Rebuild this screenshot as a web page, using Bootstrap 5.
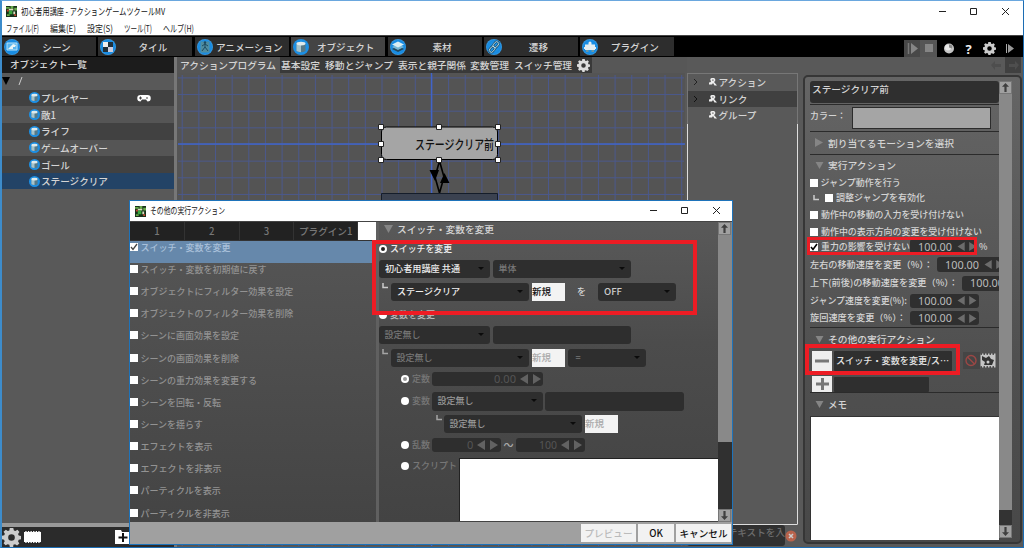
<!DOCTYPE html>
<html lang="ja">
<head>
<meta charset="utf-8">
<title>初心者用講座 - アクションゲームツクールMV</title>
<link href="https://cdn.jsdelivr.net/npm/bootstrap@5.3.0/dist/css/bootstrap.min.css" rel="stylesheet">
<style>
*{box-sizing:border-box}
body{margin:0;width:1024px;height:548px;overflow:hidden;background:#555;color:#d4d4d4;font:500 9.6px/14px "Noto Sans CJK JP","Noto Sans",sans-serif}
svg{display:block;flex:none}
.app{width:1024px;height:548px;border:1px solid #1c6db3;border-top-color:#6aa7de;border-left:2px solid #3d8ccb}
.fit{display:inline-block;white-space:nowrap;transform-origin:0 50%;flex:none}
.wtitle{height:20px;background:#fff;color:#111;padding-left:4px;font-weight:400}
.menus{height:14px;background:#fff;color:#222;padding-left:4px;font-weight:400}
.menus>.fit{margin-top:-1px}
.tools{height:22px;background:#000;border-top:1px solid #444;padding-top:1px}
.mtab{width:94px;height:19px;background:#2d2d2d;margin-right:2.4px;padding-left:2px;flex:none}
.mtab.on{background:#444}
.mtab .lbl{flex:1;text-align:center;margin-left:-3px}
.body-grid{display:grid;grid-template-columns:172px 3px 510px 1fr 219px;height:490px;background:#595959}
.side-head{height:16px;background:#1c1c1c;padding-left:8px}
.orow{height:16.65px;padding-left:27px;background:#555}
.orow:nth-child(odd){background:#414141}
.orow.sel{background:#234366}
.subs{height:16px;background:#575757}
.subs>.s{height:16px;background:#393939;flex:none;padding-left:3px;padding-top:1px}
.subs>.s.on{background:#555}
.tree{width:111px;height:452px;margin:16px 0 0 0;border:1px solid #777;border-bottom:1px solid #ddd;position:relative}
.tree:before,.tree:after{content:"";position:absolute;top:50px;bottom:0;width:1px;background:#ddd}
.tree:before{left:-1px}.tree:after{right:-1px}
.trow{height:16.5px;padding-left:6px}
.prop{height:469px;width:219px;margin-left:-1px;margin-top:18px;border:2px solid #363636;border-radius:5px;background:linear-gradient(#656565,#505050 60%,#484848);padding:3.5px 0 0 5px}
.pgrid{width:189px;overflow:hidden;display:grid;grid-template-rows:24px 27px 23px 21px 14px 16px 19px 14px 16px 20px 17.5px 17.5px 18px 23px 20px 6px 15px 24px 124px;font-size:9px}
.pgrid>div{display:flex;align-items:center;min-width:0}
.pgrid>.ln{border-bottom:1px solid #2b2b2b}
.field{background:#2f2f2f;border-radius:3px;flex:none;display:flex;align-items:center}
.num{width:69px;height:14.5px;padding-left:8px;color:#bbb;font:11px/14px "Noto Sans"}
.cbx{width:8px;height:8px;background:#fff;flex:none;margin-right:2.5px}
.head{font-size:9.6px;padding-left:5px}
.sq{width:20px;height:20px;background:#eee;flex:none}
.sbar{width:13px;background:#898989;display:flex;flex-direction:column;justify-content:space-between;flex:none}
.sbtn{width:13px;height:13px;background:#a0a0a0;border:1px solid #777}
.dlg{position:absolute;left:129px;top:200px;width:604px;height:345px;border:1px solid #1e73ba;background:#505050;font-size:9px}
.dlg .wtitle{height:21px;padding-left:5px;border-bottom:1px solid #444}
.dmain{height:300px;display:flex}
.dleft{width:246px;background:linear-gradient(#565656,#444)}
.dtab{width:54px;height:18px;margin-right:1px;background:#222;color:#777;text-align:center;line-height:18px;font-size:9.6px}
.drow{height:22.15px;color:#929292}
.drow .cbx{margin-top:2px}
.drow.on{background:#6688ab;color:#a9c0da;height:22px}
.dright{width:339px;overflow:hidden;background:linear-gradient(#595959,#4c4c4c 40%,#434343);display:grid;grid-template-rows:13px 25px 18px 4.5px 18.5px 25px 18px 4.5px 18px 5px 14px 6px 19px 4px 18.5px 5px 14px 6px 63px}
.dright>div{display:flex;align-items:center;min-height:0}
.dright>.up{align-items:flex-start}
.dright .field{background:#2e2e2e;height:100%;padding-left:5.5px;position:relative}
.caret:after{content:"";position:absolute;right:6px;top:7px;border:3px solid transparent;border-top-color:#0b0b0b;border-bottom:0}
.dim{color:#777}
.rad{width:8px;height:8px;border-radius:50%;background:#fff;flex:none}
.newb{width:33px;height:18px;background:#f3f3f3;color:#111;line-height:18px;flex:none;margin-left:3px}
.foot{height:22px;background:#a0a0a0;padding-right:1px;gap:2px}
.fb{height:18px;background:#f2f2f2;color:#111;text-align:center;line-height:18px;font-size:9.6px}
.note{position:absolute;border:4px solid #ed1c24}
.canv{height:473px;position:relative}
.lbar{height:20px;background:#2b2b2b}
</style>
<script src="https://cdn.jsdelivr.net/npm/bootstrap@5.3.0/dist/js/bootstrap.bundle.min.js"></script>
</head>
<body>
<svg width="0" height="0" style="position:absolute">
<defs>
<radialGradient id="bl"><stop offset="0" stop-color="#299ce8"/><stop offset=".8" stop-color="#168ae2"/><stop offset="1" stop-color="#3a9be0"/></radialGradient>
<symbol id="cyl" viewBox="0 0 16 16"><circle cx="8" cy="8" r="8" fill="#1c8fe4"/><path d="M3.500 4.500v7.500q4.500 2.500 9 0V4.500z" fill="#577987"/><path d="M3.500 4.500v7.500q2 1 4.500 1.200V4.500z" fill="#a5c3cc"/><ellipse cx="8" cy="4.600" rx="4.500" ry="1.900" fill="#dfeaec"/></symbol>
<symbol id="gear" viewBox="0 0 16 16"><path fill-rule="evenodd" d="M6.500 0h3l.5 2 1.300.6L13 1.500 14.700 3.300l-1.200 1.700.6 1.400 1.900.3v2.800l-1.900.4-.6 1.300 1.100 1.800-1.900 1.700-1.700-1-1.400.500L9.400 16H6.600L6.200 14.100l-1.400-.5-1.800 1L1.300 12.900l1-1.800-.6-1.300L0 9.400V6.600l1.900-.4.500-1.300L1.300 3.100 3.200 1.500l1.700 1 1.300-.5zM8 5.200a2.800 2.800 0 1 0 0 5.600 2.800 2.800 0 0 0 0-5.600"/></symbol>
<symbol id="appi" viewBox="0 0 12 12"><path fill="#17301a" d="M0 0h12v12H0z"/><path fill="#66a94a" d="M0 1h4v2H0zM5 0h3v3H5zM9 2h3v3H9zM1 9h3v2H1z"/><path fill="#d9dfbd" d="M3 3h5v2H3zM8 6h2v3H8z"/><path fill="#39a83d" d="M3 5h4v4H3z"/><path fill="#c6452f" d="M1 4h2v2H1zM9 9h2v2H9z"/></symbol>
<symbol id="arr" viewBox="0 0 20 10"><path d="M8 0v10L0 5zM13 0v10l8-5z"/></symbol>
<symbol id="up" viewBox="0 0 11 11"><path d="M5.500 1 9 4.800H6.600V10H4.400V4.800H2z" fill="#3f3f3f"/></symbol>
<symbol id="wr" viewBox="0 0 8 8"><path d="M1.200 1 2.500 0H5l1.200 1v2L5 4 8 7.500H5.500L4 5 3 6.500H0V4.500L2 4z" fill="#eee"/><path d="M3.300 1.500h1.200v1.200H3.300z" fill="#555"/></symbol>
<symbol id="tri" viewBox="0 0 9 8"><path d="M0 0h9L4.500 8z" fill="#858585"/></symbol>
<symbol id="ell" viewBox="0 0 6 6"><path d="M1 0v4.500h5" stroke="#ccc" stroke-width="1.500" fill="none"/></symbol>
</defs></svg>

<div class="app">
 <div class="wtitle d-flex align-items-center"><svg width="11" height="11"><use href="#appi"/></svg>
  <span class="fit ms-1" data-w="144">初心者用講座 - アクションゲームツクールMV</span>
  <svg class="ms-auto" width="85" height="12" style="margin-right:7px" fill="none" stroke="#222"><path d="M8 6.500h7M39.500 3.500h6v6h-6zM71 3l7 7M78 3l-7 7"/></svg></div>
 <div class="menus d-flex align-items-center">
  <span class="fit" data-w="33">ファイル(F)</span><span class="fit" data-w="26" style="margin-left:11px">編集(E)</span><span class="fit" data-w="26" style="margin-left:11px">設定(S)</span><span class="fit" data-w="28" style="margin-left:11px">ツール(T)</span><span class="fit" data-w="31" style="margin-left:11px">ヘルプ(H)</span></div>
 <div class="tools d-flex">
  <div class="mtab d-flex align-items-center"><svg width="16" height="16" viewBox="0 0 16 16"><circle cx="8" cy="8" r="8" fill="url(#bl)"/><path d="M3 4h10v7H3z" fill="#57b4ef" stroke="#b9e0f5"/><path d="M7 7l2-2 3 1-1 2H9v2H4z" fill="#e9f4f5"/></svg><span class="lbl">シーン</span></div>
  <div class="mtab d-flex align-items-center"><svg width="16" height="16" viewBox="0 0 16 16"><circle cx="8" cy="8" r="8" fill="url(#bl)"/><path d="M3 3h5v5H3z" fill="#eee"/><path d="M8 3h5v5H8zM3 8h5v5H3z" fill="#20303a"/><path d="M8 8h5v5H8z" fill="#ccd"/></svg><span class="lbl">タイル</span></div>
  <div class="mtab d-flex align-items-center"><svg width="16" height="16" viewBox="0 0 16 16"><circle cx="8" cy="8" r="8" fill="url(#bl)"/><path d="M3.500 2.500h9v11h-9z" fill="#4f8da0"/><path d="M8 4v4M5 7l3-2 3 2M8 8l-3 4M8 8l3 4" stroke="#1d4a60" fill="none"/><circle cx="8" cy="3.500" r="1.200" fill="#1d4a60"/></svg><span class="lbl">アニメーション</span></div>
  <div class="mtab on d-flex align-items-center"><svg width="16" height="16"><use href="#cyl" width="16" height="16"/></svg><span class="lbl">オブジェクト</span></div>
  <div class="mtab d-flex align-items-center"><svg width="16" height="16" viewBox="0 0 16 16"><circle cx="8" cy="8" r="8" fill="url(#bl)"/><path d="M2 10l6-3 6 3-6 3z" fill="#23485e"/><path d="M2 8l6-3 6 3-6 3z" fill="#76b6d4"/><path d="M2 5.500l6-3 6 3-6 3z" fill="#d9eef4"/></svg><span class="lbl">素材</span></div>
  <div class="mtab d-flex align-items-center"><svg width="16" height="16" viewBox="0 0 16 16"><circle cx="8" cy="8" r="8" fill="url(#bl)"/><g fill="none" stroke="#1d4f70" stroke-width="2.200"><rect x="6.500" y="3.500" width="6.500" height="4" rx="2" transform="rotate(-50 10 5.500)"/><rect x="3" y="8.500" width="6.500" height="4" rx="2" transform="rotate(-50 6 10.500)"/></g><g fill="none" stroke="#b9dfec" stroke-width=".9"><rect x="6.500" y="3.500" width="6.500" height="4" rx="2" transform="rotate(-50 10 5.500)"/><rect x="3" y="8.500" width="6.500" height="4" rx="2" transform="rotate(-50 6 10.500)"/></g></svg><span class="lbl">遷移</span></div>
  <div class="mtab d-flex align-items-center"><svg width="16" height="16" viewBox="0 0 16 16"><circle cx="8" cy="8" r="8" fill="url(#bl)"/><path d="M3 5.500h3.500V4a1.500 1.500 0 0 1 3 0v1.500H13V8h1v2h-1v1H3v-1H2V8h1z" fill="#e4edf0"/><path d="M4 11h2.500v2H4zM9.500 11H12v2H9.500z" fill="#6d97a3"/></svg><span class="lbl">プラグイン</span></div>
  <svg class="ms-auto" width="120" height="20" viewBox="903 37 120 20"><path d="M904 40h33v17h-33z" fill="#484848"/><path d="M920 40h17v17h-17z" fill="#555"/><path d="M908.500 43v11" stroke="#777" stroke-width="1.500"/><path d="M911 43l7 5.500-7 5.500zM925 44h8v8h-8z" fill="#858585"/><circle cx="949" cy="48.500" r="5" fill="#c5c5c5"/><circle cx="948" cy="47.500" r="3" fill="#e8e8e8"/><path d="M949 44.500q4.500 0 3 4l-3-1z" fill="#888"/><text x="965.500" y="53.500" font-family="Open Sans" font-weight="700" font-size="13" fill="#eee">?</text><use href="#gear" x="983" y="42" width="13" height="13" fill="#ccc"/><path d="M1006.500 44v9" stroke="#aaa"/><path d="M1008 44l6 4.500-6 4.500z" fill="#999"/></svg>
 </div>

 <div class="body-grid">
  <div class="d-flex flex-column">
   <div class="side-head"><span class="fit" data-w="77">オブジェクト一覧</span></div>
   <div>
    <div class="d-flex align-items-center" style="height:16.65px"><svg width="25" height="10"><path d="M0 1h8L4 9z" fill="#000"/><path d="M17 9 20 1" stroke="#ccc"/></svg></div>
   </div>
   <div>
    <div class="orow d-flex align-items-center"><svg width="12" height="11"><use href="#cyl" width="11" height="11"/></svg>プレイヤー<svg width="14" height="8" viewBox="0 0 14 8" style="margin-left:48px"><path d="M3.500 1h7a3 3 0 0 1 0 6.500L9 5.500H5L3.500 7.500a3 3 0 0 1 0-6.500" fill="#fff"/><path d="M2 4h3M3.500 2.500v3M10 3v2" stroke="#444"/></svg></div>
    <div class="orow d-flex align-items-center"><svg width="12" height="11"><use href="#cyl" width="11" height="11"/></svg>敵1</div>
    <div class="orow d-flex align-items-center"><svg width="12" height="11"><use href="#cyl" width="11" height="11"/></svg>ライフ</div>
    <div class="orow d-flex align-items-center"><svg width="12" height="11"><use href="#cyl" width="11" height="11"/></svg>ゲームオーバー</div>
    <div class="orow d-flex align-items-center"><svg width="12" height="11"><use href="#cyl" width="11" height="11"/></svg>ゴール</div>
    <div class="orow sel d-flex align-items-center"><svg width="12" height="11"><use href="#cyl" width="11" height="11"/></svg>ステージクリア</div>
   </div>
   <div class="mt-auto" style="height:4px;background:#999"></div>
   <div class="lbar d-flex align-items-center"><svg width="19" height="19"><use href="#gear" fill="#ccc" width="19" height="19"/></svg>
    <svg width="17" height="14" style="margin-left:3px"><path d="M0 1h17v12H0z" fill="#fff"/><path d="M0 1h17M0 13h17" stroke="#222" stroke-width="2" stroke-dasharray="1.300"/></svg>
    <svg width="14" height="14" style="margin-left:74px"><path d="M0 2V0h6l1 2h7v12H0z" fill="#fff"/><path d="M8 3v9M3.500 7.500h9" stroke="#111" stroke-width="2"/></svg></div>
  </div>
  <div style="background:#777"></div>
  <div>
   <div class="subs d-flex">
    <div class="s on" style="width:103px"><span class="fit" data-w="96">アクションプログラム</span></div>
    <div class="s" style="width:44px;padding-left:1px"><span class="fit" data-w="39">基本設定</span></div>
    <div class="s" style="width:73px;padding-left:1px"><span class="fit" data-w="68">移動とジャンプ</span></div>
    <div class="s" style="width:72px;padding-left:1px"><span class="fit" data-w="68">表示と親子関係</span></div>
    <div class="s" style="width:44px;padding-left:1px"><span class="fit" data-w="39">変数管理</span></div>
    <div class="s" style="width:61px;padding-left:1px"><span class="fit" data-w="58">スイッチ管理</span></div>
    <div class="s pt-0" style="width:18px"><svg width="13" height="16"><use href="#gear" y="2" width="13" height="13" fill="#ddd"/></svg></div>
   </div>
   <svg class="canv" width="508" height="473" viewBox="177 73 508 473">
    <defs><pattern id="gp" x="181.700" y="144" width="16.650" height="16.650" patternUnits="userSpaceOnUse"><path d="M0 .5h16.650M.5 0v16.650" stroke="#4a588c"/></pattern></defs>
    <path d="M177 73h508v473H177z" fill="#545454"/><path d="M178 75h506v471H178z" fill="url(#gp)"/>
    <path d="M178 144h507M431.500 73v473" stroke="#4064c8" stroke-width="1.400"/>
    <rect x="381.500" y="127" width="116" height="32.500" rx="5" fill="#a5a5a5" stroke="#000"/>
    <text x="415" y="148.500" font-size="13" fill="#111" font-weight="500" textLength="79" lengthAdjust="spacingAndGlyphs">ステージクリア前</text>
    <g fill="#fff" stroke="#222"><path d="M378.500 124.500h5v5h-5zM436.500 124.500h5v5h-5zM495.500 124.500h5v5h-5zM378.500 141.500h5v5h-5zM495.500 141.500h5v5h-5zM378.500 157.500h5v5h-5zM495.500 157.500h5v5h-5z"/></g>
    <path d="M439.500 161l-4.500 16 4.500 16 4.500-16z" fill="none" stroke="#000" stroke-width="1.600"/><path d="M429.500 170h9.500l-4 11zM440 183h9.500l-5-10z"/>
    <path d="M436.500 157.500h5v5h-5z" fill="#fff" stroke="#222"/>
    <path d="M381.500 193.500h116v30h-116z" fill="#3b4250" stroke="#151d2a"/>
   </svg>
  </div>
  <div>
   <div class="tree">
    <div class="trow d-flex align-items-center"><svg width="6" height="8"><path d="M0 1l3 3-3 3" stroke="#222" fill="none"/></svg><svg width="8" height="8" style="margin:0 1.5px 0 9px"><use href="#wr"/></svg><span>アクション</span></div>
    <div class="trow d-flex align-items-center" style="background:#404040"><svg width="6" height="8"><path d="M0 1l3 3-3 3" stroke="#111" fill="none"/></svg><svg width="8" height="8" style="margin:0 1.5px 0 9px"><use href="#wr"/></svg><span>リンク</span></div>
    <div class="trow d-flex align-items-center"><svg width="6" height="8"></svg><svg width="8" height="8" style="margin:0 1.5px 0 9px"><use href="#wr"/></svg><span>グループ</span></div>
   </div>
   <div class="d-flex align-items-center"><div class="text-end overflow-hidden" style="width:98px;height:21px;background:#303030;color:#6c6c6c;border-radius:3px;white-space:nowrap">テキストを入</div><svg width="12" height="12"><circle cx="6" cy="6" r="5.500" fill="#b9634c"/><path d="M4 4l4 4M8 4l-4 4" stroke="#ccc" stroke-width="1.500"/></svg></div>
  </div>
  <div class="position-relative">
   <svg class="position-absolute" style="right:2px;top:0" width="32" height="16"><path d="M16 0h16v16H16z" fill="#404040"/><path d="M2 8l4-4v3h6v3H6v3zM30 8l-4-4v3h-6v3h6v3z" fill="#4e4e4e"/></svg>
   <div class="prop d-flex">
    <div class="pgrid">
     <div class="ln"><div class="field w-100" style="height:22px;padding:0 0 6px 2px"><span class="fit" data-w="77" style="font-size:9.6px">ステージクリア前</span></div></div>
     <div class="ln"><span class="fit" style="margin-top:-3px" data-w="36">カラー：</span><i style="margin-left:6px;width:139px;height:22px;background:#a5a5a5;border:1px solid #2c2c2c"></i></div>
     <div class="head ln"><svg width="8" height="9"><path d="M0 0v9l8-4.500z" fill="#858585"/></svg><span class="fit" style="margin-left:5px" data-w="126">割り当てるモーションを選択</span></div>
     <div class="head"><svg width="9" height="7"><use href="#tri"/></svg><span class="fit" style="margin-left:4px" data-w="68">実行アクション</span></div>
     <div><i class="cbx"></i>ジャンプ動作を行う</div>
     <div><svg width="6" height="6" style="margin:0 6px 0 3px"><use href="#ell"/></svg><i class="cbx"></i><span class="fit" data-w="89">調整ジャンプを有効化</span></div>
     <div><i class="cbx"></i><span class="fit" data-w="143">動作中の移動の入力を受け付けない</span></div>
     <div><i class="cbx"></i><span class="fit" data-w="161">動作中の表示方向の変更を受け付けない</span></div>
     <div><svg class="cbx" viewBox="0 0 8 8"><path d="M1 4l2 2.500L7 1" fill="none" stroke="#000" stroke-width="1.600"/></svg><span class="fit" data-w="89">重力の影響を受けない</span><div class="field num" style="margin-left:.5px;width:67px"><span class="fit" data-w="34">100.00</span><svg class="ms-1" width="21" height="9" fill="#6c6c6c"><use href="#arr"/></svg></div><span style="margin-left:2px">%</span></div>
     <div><span class="fit" data-w="123">左右の移動速度を変更（%）：</span><div class="field num" style="margin-left:4px"><span class="fit" data-w="34">100.00</span><svg class="ms-1" width="21" height="9" fill="#6c6c6c"><use href="#arr"/></svg></div></div>
     <div><span class="fit" data-w="148">上下(前後)の移動速度を変更（%）：</span><div class="field num" style="margin-left:4px"><span class="fit" data-w="34">100.00</span></div></div>
     <div><span class="fit" data-w="97">ジャンプ速度を変更(%):</span><div class="field num" style="margin-left:3px"><span class="fit" data-w="34">100.00</span><svg class="ms-1" width="21" height="9" fill="#6c6c6c"><use href="#arr"/></svg></div></div>
     <div class="ln"><span class="fit" data-w="96">旋回速度を変更（%）：</span><div class="field num" style="margin-left:4px"><span class="fit" data-w="34">100.00</span><svg class="ms-1" width="21" height="9" fill="#6c6c6c"><use href="#arr"/></svg></div></div>
     <div class="head"><svg width="9" height="7"><use href="#tri"/></svg><span class="fit" style="margin-left:4px" data-w="107">その他の実行アクション</span></div>
     <div style="padding-left:2px"><svg class="sq"><path d="M3 10h14" stroke="#777" stroke-width="3"/></svg><div class="field" style="margin-left:2px;width:118px;height:20px;padding-left:2px;border-radius:1px;color:#e4e4e4"><span class="fit" data-w="113">スイッチ・変数を変更/ス…</span></div>
      <svg width="34" height="17" style="margin-left:11px"><path d="M0 0h17v17H0z" fill="#454545"/><circle cx="8" cy="8.500" r="5" fill="none" stroke="#9b4745" stroke-width="1.400"/><path d="M4.500 5l7 7" stroke="#9b4745" stroke-width="1.400"/><path d="M17.500 1.500h15v14h-15z" fill="#c4c4c4"/><path d="M17.500 2h15M17.500 15h15" stroke="#333" stroke-width="1.500" stroke-dasharray="1.500"/><path d="M19 4l4 2 3-2 2 3 3 1-2 5h-8l1-3-3-2z" fill="#333"/><circle cx="25" cy="10" r="1.500" fill="#ccc"/></svg></div>
     <div></div>
     <div style="padding-left:2px"><svg class="sq" style="height:16px"><path d="M4 8h13M10.500 2v12" stroke="#777" stroke-width="3"/></svg><div class="field" style="margin-left:2px;width:95px;height:15px;border-radius:1px"></div></div>
     <div class="head" style="border-top:1px solid #2b2b2b"><svg width="9" height="7"><use href="#tri"/></svg><span class="fit" style="margin-left:4px" data-w="19">メモ</span></div>
     <div style="background:#fff;border:1px solid #333;border-width:1px 0 0 1px"></div>
    </div>
    <div class="sbar" style="height:457px"><svg class="sbtn"><use href="#up"/></svg><div class="mt-auto" style="height:15px;background:#333"></div><svg class="sbtn" style="transform:scaleY(-1)"><use href="#up"/></svg></div>
   </div>
  </div>
 </div>
</div>

<div class="dlg">
 <div class="wtitle d-flex align-items-center"><svg width="11" height="11"><use href="#appi"/></svg><span class="fit" style="margin-left:4px" data-w="75">その他の実行アクション</span>
 <svg class="ms-auto" width="85" height="12" style="margin-right:7px" fill="none" stroke="#222"><path d="M10 5.500h7M41.500 2.500h6v6h-6zM73 2l7 7M80 2l-7 7"/></svg></div>
 <div class="dmain">
  <div class="dleft">
   <div class="d-flex" style="height:19px;background:#333"><div class="dtab">1</div><div class="dtab">2</div><div class="dtab">3</div><div class="dtab" style="width:63px">プラグイン1</div><div style="width:18px;height:18px;background:#fff"></div></div>
   <div id="acts"></div>
  </div>
  <div style="width:3px;background:#606060"></div>
  <div class="dright">
   <div class="head"><svg width="9" height="8"><use href="#tri"/></svg><span class="fit" style="margin-left:4px" data-w="97">スイッチ・変数を変更</span></div>
   <div style="padding-top:3px"><svg width="8" height="8"><circle cx="4" cy="4" r="3" fill="#222" stroke="#fff" stroke-width="2"/></svg><span class="fit" style="margin-left:3px;color:#eee" data-w="62">スイッチを変更</span></div>
   <div><div class="field caret" style="width:111px;color:#eee"><span class="fit" data-w="75">初心者用講座 共通</span></div><div class="field caret dim" style="width:138px;margin-left:3px">単体</div></div>
   <div></div>
   <div><svg width="6" height="6" style="margin:0 3px 12px 3px"><use href="#ell"/></svg><div class="field caret" style="width:138px;color:#eee"><span class="fit" data-w="63">ステージクリア</span></div><div class="newb"><span class="fit" data-w="19">新規</span></div><span style="margin:0 12px 0 12px">を</span><div class="field caret" style="width:78px;color:#ccc"><span class="fit" data-w="18">OFF</span></div></div>
   <div style="padding-top:3px"><i class="rad"></i><span style="margin-left:3px;color:#bbb">変数を変更</span></div>
   <div><div class="field caret dim" style="width:111px">設定無し</div><div class="field" style="width:138px;margin-left:3px"></div></div>
   <div></div>
   <div><svg width="6" height="6" style="margin:0 3px 12px 3px;opacity:.7"><use href="#ell"/></svg><div class="field caret dim" style="width:138px">設定無し</div><div class="newb" style="color:#aaa"><span class="fit" data-w="19">新規</span></div><div class="field caret dim" style="width:78px;margin-left:3px">&nbsp;=</div></div>
   <div></div>
   <div class="dim" style="padding-left:22px"><svg width="8" height="8"><circle cx="4" cy="4" r="4" fill="#fff"/><circle cx="4" cy="4" r="2" fill="#999"/></svg><span class="fit" style="margin-left:3px" data-w="18">定数</span><div class="field num" style="width:111px;margin-left:2px;padding-left:62px;color:#555"><span class="fit" data-w="22">0.00</span><svg style="margin-left:3px" width="22" height="10" fill="#626262"><use href="#arr"/></svg></div></div>
   <div></div>
   <div class="dim" style="padding-left:22px"><i class="rad"></i><span class="fit" style="margin-left:3px" data-w="18">変数</span><div class="field caret" style="width:111px;margin-left:2px;color:#999">設定無し</div><div class="field" style="width:139px;margin-left:2px"></div></div>
   <div></div>
   <div style="padding-left:54px"><svg width="6" height="6" style="margin:0 3px 12px 3px;opacity:.7"><use href="#ell"/></svg><div class="field caret" style="width:138px;color:#999;margin-left:-1px">設定無し</div><div class="newb" style="color:#aaa"><span class="fit" data-w="19">新規</span></div></div>
   <div></div>
   <div class="dim" style="padding-left:22px"><i class="rad"></i><span class="fit" style="margin-left:3px" data-w="18">乱数</span><div class="field num" style="width:69px;margin-left:2px;padding-left:35px;color:#555">0<svg style="margin-left:3px" width="22" height="10" fill="#626262"><use href="#arr"/></svg></div><span style="width:15px;text-align:center;font-size:10px;color:#aaa">～</span><div class="field num" style="width:69px;padding-left:23px;color:#555"><span class="fit" data-w="18">100</span><svg style="margin-left:3px" width="22" height="10" fill="#626262"><use href="#arr"/></svg></div></div>
   <div></div>
   <div class="up dim" style="padding-left:22px"><i class="rad" style="margin-top:4px"></i><span class="fit" style="margin-left:3px;margin-top:1px" data-w="45">スクリプト</span><div style="margin-left:2px;width:259px;height:63px;background:#fff;border:1px solid #222;border-width:1px 0 0 1px"></div></div>
  </div>
  <div class="sbar" style="width:14px"><svg class="sbtn"><use href="#up"/></svg><div class="mt-auto" style="height:67px;background:#303030"></div><svg class="sbtn" style="transform:scaleY(-1)"><use href="#up"/></svg></div>
 </div>
 <div class="foot d-flex justify-content-end align-items-center"><div class="fb" style="width:55px;color:#bbb">プレビュー</div><div class="fb" style="width:36px">OK</div><div class="fb" style="width:55px">キャンセル</div></div>
</div>

<div class="note" style="left:372px;top:240px;width:325px;height:75px"></div>
<div class="note" style="left:807px;top:237px;width:170px;height:18px;border-width:3.500px"></div>
<div class="note" style="left:805px;top:344px;width:155px;height:31px"></div>

<script>
const names=["スイッチ・変数を変更","スイッチ・変数を初期値に戻す","オブジェクトにフィルター効果を設定","オブジェクトのフィルター効果を削除","シーンに画面効果を設定","シーンの画面効果を削除","シーンの重力効果を変更する","シーンを回転・反転","シーンを揺らす","エフェクトを表示","エフェクトを非表示","パーティクルを表示","パーティクルを非表示"];
document.getElementById("acts").innerHTML=names.map((n,i)=>`<div class="drow d-flex align-items-start${i?"":" on"}"><svg class="cbx" viewBox="0 0 8 8">${i?"":'<path d="M1 4l2 2.500L7 1" fill="none" stroke="#444" stroke-width="1.300"/>'}</svg><span>${n}</span></div>`).join("");
// squeeze labels to their column widths
document.querySelectorAll("[data-w]").forEach(e=>{const w=+e.dataset.w,o=e.getBoundingClientRect().width;e.style.transform=`scaleX(${w/o})`;e.style.marginRight=(w-o)+"px"});
</script>
</body>
</html>
